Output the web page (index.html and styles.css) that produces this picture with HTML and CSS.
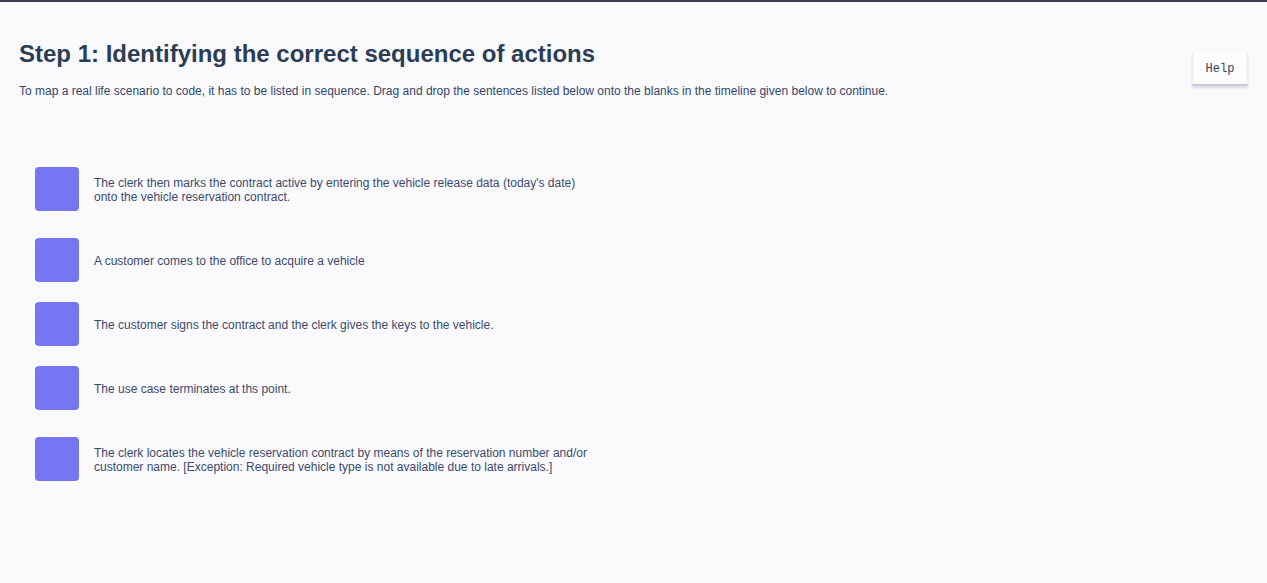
FILE: index.html
```html
<!DOCTYPE html>
<html lang="en">
<head>
<meta charset="utf-8">
<title>Step 1</title>
<link rel="stylesheet" href="styles.css">
</head>
<body>
<div class="topbar"></div>
<main class="page">
  <header class="head">
    <div class="intro">
      <h1 class="title">Step 1: Identifying the correct sequence of actions</h1>
      <p class="lead">To map a real life scenario to code, it has to be listed in sequence. Drag and drop the sentences listed below onto the blanks in the timeline given below to continue.</p>
    </div>
    <button class="help">Help</button>
  </header>
  <ul class="items">
    <li class="item gap-after"><span class="handle"></span><span class="text">The clerk then marks the contract active by entering the vehicle release data (today's date)<br>onto the vehicle reservation contract.</span></li>
    <li class="item"><span class="handle"></span><span class="text">A customer comes to the office to acquire a vehicle</span></li>
    <li class="item"><span class="handle"></span><span class="text">The customer signs the contract and the clerk gives the keys to the vehicle.</span></li>
    <li class="item gap-after"><span class="handle"></span><span class="text">The use case terminates at ths point.</span></li>
    <li class="item"><span class="handle"></span><span class="text">The clerk locates the vehicle reservation contract by means of the reservation number and/or<br>customer name. [Exception: Required vehicle type is not available due to late arrivals.]</span></li>
  </ul>
</main>
</body>
</html>
```
FILE: styles.css
```css
* { box-sizing: border-box; }
html, body { margin: 0; padding: 0; }
body {
  background: #fafafd;
  font-family: "Liberation Sans", Arial, sans-serif;
  color: #34466a;
  width: 1267px;
  height: 583px;
  overflow: hidden;
}
.topbar {
  height: 2px;
  background: #3c3c52;
}
.page {
  padding: 0 19px;
}
.head {
  display: flex;
  justify-content: space-between;
  align-items: flex-start;
  padding-top: 38px;
}
.title {
  margin: 0;
  font-size: 24px;
  font-weight: bold;
  color: #2c3e55;
  line-height: 28px;
}
.lead {
  margin: 15px 0 0;
  font-size: 12px;
  line-height: 16px;
  color: #33476c;
}
.help {
  margin-top: 13px;
  width: 56px;
  height: 33px;
  background: #fdfdfe;
  border: 1px dotted #d6d6ee;
  border-top: none;
  border-bottom: 2px solid #c9c9dd;
  box-shadow: 0 2px 2px rgba(120,120,170,0.25);
  font-family: "Liberation Mono", "DejaVu Sans Mono", monospace;
  font-size: 12px;
  color: #3c3f5a;
  padding: 0;
}
.items {
  list-style: none;
  margin: 68px 0 0;
  padding: 0 0 0 16px;
  display: flex;
  flex-direction: column;
  gap: 20px;
}
.item {
  display: flex;
  align-items: center;
  gap: 15px;
}
.item.gap-after { margin-bottom: 7px; }
.handle {
  flex: none;
  width: 44px;
  height: 44px;
  border-radius: 4px;
  background: #7676f2;
}
.text {
  font-size: 12px;
  line-height: 14px;
  color: #3a4a6e;
  padding-top: 2px;
}
```
